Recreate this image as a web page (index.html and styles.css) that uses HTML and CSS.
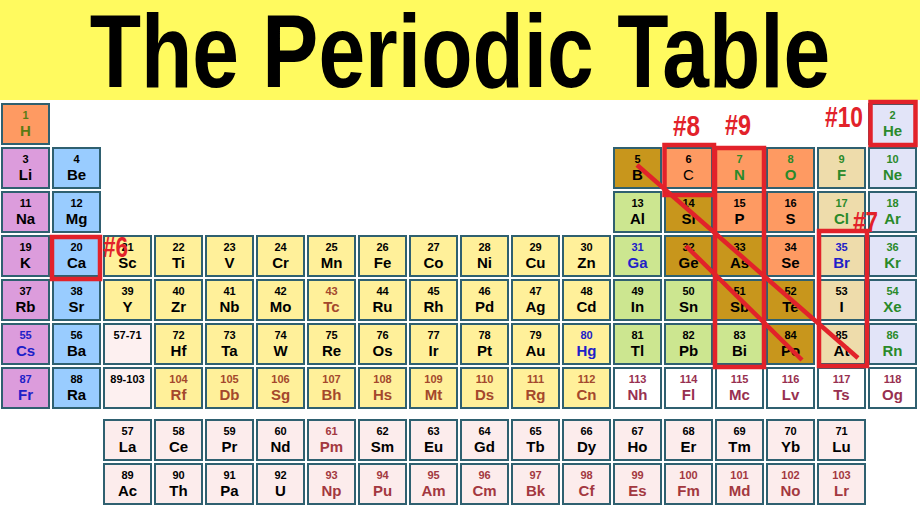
FILE: index.html
```html
<!DOCTYPE html>
<html lang="en">
<head>
    <meta charset="UTF-8">
    <meta name="viewport" content="width=device-width, initial-scale=1.0">
    <title>The Periodic Table</title>
    <link rel="stylesheet" href="styles.css">
</head>
<body>
    <header class="banner">
        <h1 class="banner-title">The Periodic Table</h1>
    </header>

    <div class="ptable">
        <!-- period 1 -->
        <div class="el nonmetal gas"><span class="num">1</span><span class="sym">H</span></div>
        <div class="el noble gas at-18"><span class="num">2</span><span class="sym">He</span></div>

        <!-- period 2 -->
        <div class="el alkali"><span class="num">3</span><span class="sym">Li</span></div>
        <div class="el alkaline"><span class="num">4</span><span class="sym">Be</span></div>
        <div class="el metalloid at-13"><span class="num">5</span><span class="sym">B</span></div>
        <div class="el nonmetal"><span class="num">6</span><span class="sym thin">C</span></div>
        <div class="el nonmetal gas"><span class="num">7</span><span class="sym">N</span></div>
        <div class="el nonmetal gas"><span class="num">8</span><span class="sym">O</span></div>
        <div class="el halogen gas"><span class="num">9</span><span class="sym">F</span></div>
        <div class="el noble gas"><span class="num">10</span><span class="sym">Ne</span></div>

        <!-- period 3 -->
        <div class="el alkali"><span class="num">11</span><span class="sym">Na</span></div>
        <div class="el alkaline"><span class="num">12</span><span class="sym">Mg</span></div>
        <div class="el post at-13"><span class="num">13</span><span class="sym">Al</span></div>
        <div class="el metalloid"><span class="num">14</span><span class="sym">Si</span></div>
        <div class="el nonmetal"><span class="num">15</span><span class="sym">P</span></div>
        <div class="el nonmetal"><span class="num">16</span><span class="sym">S</span></div>
        <div class="el halogen gas"><span class="num">17</span><span class="sym">Cl</span></div>
        <div class="el noble gas"><span class="num">18</span><span class="sym">Ar</span></div>

        <!-- period 4 -->
        <div class="el alkali"><span class="num">19</span><span class="sym">K</span></div>
        <div class="el alkaline"><span class="num">20</span><span class="sym">Ca</span></div>
        <div class="el transition"><span class="num">21</span><span class="sym">Sc</span></div>
        <div class="el transition"><span class="num">22</span><span class="sym">Ti</span></div>
        <div class="el transition"><span class="num">23</span><span class="sym">V</span></div>
        <div class="el transition"><span class="num">24</span><span class="sym">Cr</span></div>
        <div class="el transition"><span class="num">25</span><span class="sym">Mn</span></div>
        <div class="el transition"><span class="num">26</span><span class="sym">Fe</span></div>
        <div class="el transition"><span class="num">27</span><span class="sym">Co</span></div>
        <div class="el transition"><span class="num">28</span><span class="sym">Ni</span></div>
        <div class="el transition"><span class="num">29</span><span class="sym">Cu</span></div>
        <div class="el transition"><span class="num">30</span><span class="sym">Zn</span></div>
        <div class="el post liquid"><span class="num">31</span><span class="sym">Ga</span></div>
        <div class="el metalloid"><span class="num">32</span><span class="sym">Ge</span></div>
        <div class="el metalloid"><span class="num">33</span><span class="sym">As</span></div>
        <div class="el nonmetal"><span class="num">34</span><span class="sym">Se</span></div>
        <div class="el halogen liquid"><span class="num">35</span><span class="sym">Br</span></div>
        <div class="el noble gas"><span class="num">36</span><span class="sym">Kr</span></div>

        <!-- period 5 -->
        <div class="el alkali"><span class="num">37</span><span class="sym">Rb</span></div>
        <div class="el alkaline"><span class="num">38</span><span class="sym">Sr</span></div>
        <div class="el transition"><span class="num">39</span><span class="sym">Y</span></div>
        <div class="el transition"><span class="num">40</span><span class="sym">Zr</span></div>
        <div class="el transition"><span class="num">41</span><span class="sym">Nb</span></div>
        <div class="el transition"><span class="num">42</span><span class="sym">Mo</span></div>
        <div class="el transition synth"><span class="num">43</span><span class="sym">Tc</span></div>
        <div class="el transition"><span class="num">44</span><span class="sym">Ru</span></div>
        <div class="el transition"><span class="num">45</span><span class="sym">Rh</span></div>
        <div class="el transition"><span class="num">46</span><span class="sym">Pd</span></div>
        <div class="el transition"><span class="num">47</span><span class="sym">Ag</span></div>
        <div class="el transition"><span class="num">48</span><span class="sym">Cd</span></div>
        <div class="el post"><span class="num">49</span><span class="sym">In</span></div>
        <div class="el post"><span class="num">50</span><span class="sym">Sn</span></div>
        <div class="el metalloid"><span class="num">51</span><span class="sym">Sb</span></div>
        <div class="el metalloid"><span class="num">52</span><span class="sym">Te</span></div>
        <div class="el halogen"><span class="num">53</span><span class="sym">I</span></div>
        <div class="el noble gas"><span class="num">54</span><span class="sym">Xe</span></div>

        <!-- period 6 -->
        <div class="el alkali liquid"><span class="num">55</span><span class="sym">Cs</span></div>
        <div class="el alkaline"><span class="num">56</span><span class="sym">Ba</span></div>
        <div class="el series"><span class="num">57-71</span></div>
        <div class="el transition"><span class="num">72</span><span class="sym">Hf</span></div>
        <div class="el transition"><span class="num">73</span><span class="sym">Ta</span></div>
        <div class="el transition"><span class="num">74</span><span class="sym">W</span></div>
        <div class="el transition"><span class="num">75</span><span class="sym">Re</span></div>
        <div class="el transition"><span class="num">76</span><span class="sym">Os</span></div>
        <div class="el transition"><span class="num">77</span><span class="sym">Ir</span></div>
        <div class="el transition"><span class="num">78</span><span class="sym">Pt</span></div>
        <div class="el transition"><span class="num">79</span><span class="sym">Au</span></div>
        <div class="el transition liquid"><span class="num">80</span><span class="sym">Hg</span></div>
        <div class="el post"><span class="num">81</span><span class="sym">Tl</span></div>
        <div class="el post"><span class="num">82</span><span class="sym">Pb</span></div>
        <div class="el post"><span class="num">83</span><span class="sym">Bi</span></div>
        <div class="el metalloid"><span class="num">84</span><span class="sym">Po</span></div>
        <div class="el halogen"><span class="num">85</span><span class="sym">At</span></div>
        <div class="el noble gas"><span class="num">86</span><span class="sym">Rn</span></div>

        <!-- period 7 -->
        <div class="el alkali liquid"><span class="num">87</span><span class="sym">Fr</span></div>
        <div class="el alkaline"><span class="num">88</span><span class="sym">Ra</span></div>
        <div class="el series"><span class="num">89-103</span></div>
        <div class="el transition synth"><span class="num">104</span><span class="sym">Rf</span></div>
        <div class="el transition synth"><span class="num">105</span><span class="sym">Db</span></div>
        <div class="el transition synth"><span class="num">106</span><span class="sym">Sg</span></div>
        <div class="el transition synth"><span class="num">107</span><span class="sym">Bh</span></div>
        <div class="el transition synth"><span class="num">108</span><span class="sym">Hs</span></div>
        <div class="el transition synth"><span class="num">109</span><span class="sym">Mt</span></div>
        <div class="el transition synth"><span class="num">110</span><span class="sym">Ds</span></div>
        <div class="el transition synth"><span class="num">111</span><span class="sym">Rg</span></div>
        <div class="el transition synth"><span class="num">112</span><span class="sym">Cn</span></div>
        <div class="el unknown"><span class="num">113</span><span class="sym">Nh</span></div>
        <div class="el unknown"><span class="num">114</span><span class="sym">Fl</span></div>
        <div class="el unknown"><span class="num">115</span><span class="sym">Mc</span></div>
        <div class="el unknown"><span class="num">116</span><span class="sym">Lv</span></div>
        <div class="el unknown"><span class="num">117</span><span class="sym">Ts</span></div>
        <div class="el unknown"><span class="num">118</span><span class="sym">Og</span></div>
    </div>

    <div class="fblock">
        <div class="el inner"><span class="num">57</span><span class="sym">La</span></div>
        <div class="el inner"><span class="num">58</span><span class="sym">Ce</span></div>
        <div class="el inner"><span class="num">59</span><span class="sym">Pr</span></div>
        <div class="el inner"><span class="num">60</span><span class="sym">Nd</span></div>
        <div class="el inner synth-f"><span class="num">61</span><span class="sym">Pm</span></div>
        <div class="el inner"><span class="num">62</span><span class="sym">Sm</span></div>
        <div class="el inner"><span class="num">63</span><span class="sym">Eu</span></div>
        <div class="el inner"><span class="num">64</span><span class="sym">Gd</span></div>
        <div class="el inner"><span class="num">65</span><span class="sym">Tb</span></div>
        <div class="el inner"><span class="num">66</span><span class="sym">Dy</span></div>
        <div class="el inner"><span class="num">67</span><span class="sym">Ho</span></div>
        <div class="el inner"><span class="num">68</span><span class="sym">Er</span></div>
        <div class="el inner"><span class="num">69</span><span class="sym">Tm</span></div>
        <div class="el inner"><span class="num">70</span><span class="sym">Yb</span></div>
        <div class="el inner"><span class="num">71</span><span class="sym">Lu</span></div>

        <div class="el inner"><span class="num">89</span><span class="sym">Ac</span></div>
        <div class="el inner"><span class="num">90</span><span class="sym">Th</span></div>
        <div class="el inner"><span class="num">91</span><span class="sym">Pa</span></div>
        <div class="el inner"><span class="num">92</span><span class="sym">U</span></div>
        <div class="el inner synth-f"><span class="num">93</span><span class="sym">Np</span></div>
        <div class="el inner synth-f"><span class="num">94</span><span class="sym">Pu</span></div>
        <div class="el inner synth-f"><span class="num">95</span><span class="sym">Am</span></div>
        <div class="el inner synth-f"><span class="num">96</span><span class="sym">Cm</span></div>
        <div class="el inner synth-f"><span class="num">97</span><span class="sym">Bk</span></div>
        <div class="el inner synth-f"><span class="num">98</span><span class="sym">Cf</span></div>
        <div class="el inner synth-f"><span class="num">99</span><span class="sym">Es</span></div>
        <div class="el inner synth-f"><span class="num">100</span><span class="sym">Fm</span></div>
        <div class="el inner synth-f"><span class="num">101</span><span class="sym">Md</span></div>
        <div class="el inner synth-f"><span class="num">102</span><span class="sym">No</span></div>
        <div class="el inner synth-f"><span class="num">103</span><span class="sym">Lr</span></div>
    </div>

    <!-- hand-drawn markup on top of the table -->
    <svg class="marks" width="920" height="518" viewBox="0 0 920 518">
        <g class="mark-box">
            <rect x="52" y="237" width="48" height="42"/>
            <rect x="664.5" y="145" width="49.5" height="50"/>
            <rect x="715" y="148" width="49" height="219"/>
            <rect x="819" y="231" width="48" height="135"/>
            <rect x="870.5" y="102" width="45" height="43"/>
        </g>
        <g class="mark-line">
            <line x1="637" y1="165" x2="858" y2="358"/>
            <line x1="686" y1="246" x2="802" y2="360"/>
        </g>
        <g class="mark-label">
            <text x="103" y="257" textLength="25" lengthAdjust="spacingAndGlyphs">#6</text>
            <text x="853" y="232" textLength="25" lengthAdjust="spacingAndGlyphs">#7</text>
            <text x="673" y="136" textLength="27" lengthAdjust="spacingAndGlyphs">#8</text>
            <text x="725" y="135" textLength="26" lengthAdjust="spacingAndGlyphs">#9</text>
            <text x="825" y="127" textLength="38" lengthAdjust="spacingAndGlyphs">#10</text>
        </g>
    </svg>
</body>
</html>
```

FILE: styles.css
```css
* {
    margin: 0;
    padding: 0;
    box-sizing: border-box;
}

body {
    font-family: 'Liberation Sans', Arial, sans-serif;
    background: #ffffff;
    color: #000000;
    width: 920px;
    height: 518px;
    overflow: hidden;
    position: relative;
}

.banner {
    background: #fffa5f;
    height: 100px;
    padding-top: 1px;
    display: flex;
    justify-content: center;
    align-items: center;
}

/* no narrow face installed, so stretch the bold one upward instead */
.banner-title {
    font-family: 'Liberation Sans', Arial, sans-serif;
    font-weight: 700;
    font-size: 84px;
    line-height: 78px;
    white-space: nowrap;
    transform: scaleY(1.226);
}

/* main table */
.ptable,
.fblock {
    display: grid;
    grid-template-columns: repeat(18, 49px);
    grid-auto-rows: 42px;
    gap: 2px;
}

.ptable {
    margin: 3px 0 0 1px;
}

.fblock {
    grid-template-columns: repeat(15, 49px);
    margin: 10px 0 0 103px;
}

.at-13 { grid-column: 13; }
.at-18 { grid-column: 18; }

.el {
    border: 2px solid #2f6070;
    display: flex;
    flex-direction: column;
    align-items: center;
    padding-top: 4px;
    font-weight: 700;
}

.num {
    font-size: 11px;
    line-height: 13px;
}

.sym {
    font-size: 15px;
    line-height: 17px;
}

.sym.thin {
    font-weight: 400;
}

/* categories */
.nonmetal   { background: #fe9a62; }
.alkali     { background: #dc9cdc; }
.alkaline   { background: #99ccff; }
.transition { background: #fff09a; }
.post       { background: #cce690; }
.metalloid  { background: #c8961c; }
.halogen    { background: #eedcab; }
.noble      { background: #e2e4f8; }
.series     { background: #fdf0f0; }
.inner      { background: #fcecec; }
.unknown    { background: #ffffff; color: #983050; }

/* state / origin text colours */
.gas      { color: #2a8a2a; }
.nonmetal.gas:first-child { color: #5a7a14; }
.liquid   { color: #2020c8; }
.synth    { color: #a4482c; }
.synth-f  { color: #a33840; }

/* annotations */
.marks {
    position: absolute;
    top: 0;
    left: 0;
    pointer-events: none;
}

.mark-box rect {
    fill: none;
    stroke: #e2222a;
    stroke-width: 4.5;
}

.mark-line line {
    stroke: #e2222a;
    stroke-width: 4.5;
}

.mark-label text {
    font-family: 'Liberation Sans', Arial, sans-serif;
    font-weight: 700;
    font-size: 29px;
    fill: #e2222a;
}
```
